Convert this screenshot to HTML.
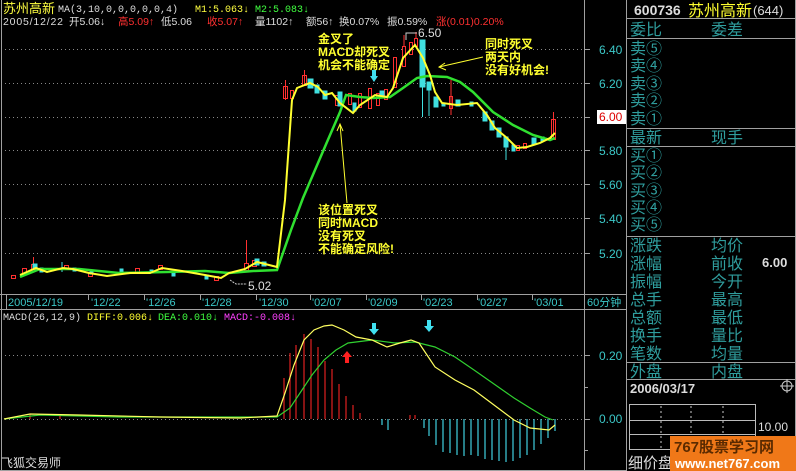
<!DOCTYPE html>
<html><head><meta charset="utf-8"><style>
html,body{margin:0;padding:0;background:#000;width:796px;height:471px;overflow:hidden}
svg{display:block}
text{font-family:"Liberation Sans","Noto Sans CJK SC",sans-serif}
.t{font-size:16px;fill:#2f9d9d}
.m{font-family:"Liberation Mono","Noto Sans CJK SC",monospace}
</style></head><body>
<svg width="796" height="471" viewBox="0 0 796 471" xmlns="http://www.w3.org/2000/svg">
<rect width="796" height="471" fill="#000"/>
<g stroke="#a0a0a0" stroke-width="1" fill="none">
<line x1="584.5" y1="0" x2="584.5" y2="471"/>
<line x1="626.5" y1="0" x2="626.5" y2="471"/>
<line x1="1.5" y1="0" x2="1.5" y2="471"/>
<line x1="0" y1="294.5" x2="626" y2="294.5"/>
<line x1="0" y1="309.5" x2="626" y2="309.5"/>
<line x1="0" y1="470.5" x2="626" y2="470.5"/>
</g>
<g stroke="#888" stroke-dasharray="1,3" stroke-width="1">
<line x1="5" y1="49.5" x2="582" y2="49.5"/><line x1="5" y1="83.5" x2="582" y2="83.5"/>
<line x1="5" y1="117.5" x2="582" y2="117.5"/><line x1="5" y1="150.5" x2="582" y2="150.5"/>
<line x1="5" y1="184.5" x2="582" y2="184.5"/><line x1="5" y1="218.5" x2="582" y2="218.5"/>
<line x1="5" y1="253.5" x2="582" y2="253.5"/>
<line x1="5" y1="355.5" x2="582" y2="355.5"/><line x1="5" y1="419.5" x2="582" y2="419.5"/>
</g>
<g stroke="#a0a0a0"><line x1="584" y1="49.5" x2="590" y2="49.5"/><line x1="584" y1="83.5" x2="590" y2="83.5"/><line x1="584" y1="117.5" x2="590" y2="117.5"/><line x1="584" y1="150.5" x2="590" y2="150.5"/><line x1="584" y1="184.5" x2="590" y2="184.5"/><line x1="584" y1="218.5" x2="590" y2="218.5"/><line x1="584" y1="253.5" x2="590" y2="253.5"/><line x1="584" y1="355.5" x2="590" y2="355.5"/><line x1="584" y1="419.5" x2="590" y2="419.5"/><line x1="584" y1="387.5" x2="588" y2="387.5"/><line x1="584" y1="450.5" x2="588" y2="450.5"/></g>
<g font-size="12" fill="#3cc8c8" font-family="Liberation Mono,monospace">
<text x="599" y="54">6.40</text><text x="599" y="88">6.20</text>
<text x="599" y="155">5.80</text><text x="599" y="189">5.60</text><text x="599" y="223">5.40</text><text x="599" y="258">5.20</text>
<text x="599" y="360">0.20</text><text x="599" y="423">0.00</text>
</g>
<rect x="597" y="110" width="29" height="14" fill="#fff"/>
<text x="599" y="121" font-size="12" fill="#d00" font-family="Liberation Mono,monospace">6.00</text>
<text x="3" y="13" font-size="13" fill="#ffff40">苏州高新</text>
<text class="m" x="58" y="12" font-size="10" fill="#ddd">MA(3,10,0,0,0,0,0,4)</text>
<text class="m" x="195" y="12" font-size="10" fill="#ffff40">M1:5.063↓</text>
<text class="m" x="255" y="12" font-size="10" fill="#40ff40">M2:5.083↓</text>
<g class="m" font-size="10.5">
<text x="3" y="25" fill="#ddd" textLength="60">2005/12/22</text>
<text x="69" y="25" fill="#ddd">开5.06↓</text>
<text x="118" y="25" fill="#ff3030">高5.09↑</text>
<text x="161" y="25" fill="#ddd">低5.06</text>
<text x="207" y="25" fill="#ff3030">收5.07↑</text>
<text x="255" y="25" fill="#ddd">量1102↑</text>
<text x="306" y="25" fill="#ddd">额56↑</text>
<text x="339" y="25" fill="#ddd">换0.07%</text>
<text x="387" y="25" fill="#ddd">振0.59%</text>
<text x="436" y="25" fill="#ff3030">涨(0.01)0.20%</text>
</g>
<g stroke-width="1">
<g stroke="#ff3030" fill="none">
<rect x="11.5" y="275.5" width="4" height="3"/><rect x="22.5" y="268.5" width="4" height="6"/><rect x="31.5" y="264.5" width="4" height="5"/>
<line x1="33.5" y1="257" x2="33.5" y2="264"/>
<rect x="64.5" y="265.5" width="4" height="3"/><rect x="88.5" y="272.5" width="4" height="4"/>
<rect x="135.5" y="268.5" width="4" height="4"/><rect x="158.5" y="265.5" width="4" height="4"/>
<rect x="214.5" y="276.5" width="4" height="4"/><rect x="244.5" y="263.5" width="4" height="7"/><line x1="246.5" y1="240" x2="246.5" y2="263"/>
<rect x="252.5" y="260.5" width="4" height="6"/>
<rect x="283.5" y="86.5" width="4" height="12"/><line x1="285.5" y1="80" x2="285.5" y2="100"/>
<rect x="290.5" y="90.5" width="3" height="8"/><rect x="302.5" y="75.5" width="4" height="10"/><line x1="304.5" y1="70" x2="304.5" y2="85"/>
<rect x="335.5" y="95.5" width="3" height="10"/><rect x="348.5" y="93.5" width="3" height="11"/><rect x="358.5" y="93.5" width="3" height="14"/>
<rect x="368.5" y="88.5" width="3" height="20"/><rect x="376.5" y="93.5" width="3" height="12"/><rect x="384.5" y="89.5" width="3" height="10"/>
<rect x="393.5" y="57.5" width="3" height="30"/><rect x="402.5" y="46.5" width="3" height="20"/><line x1="404" y1="35" x2="404" y2="46"/>
<rect x="409.5" y="42.5" width="3" height="12"/><rect x="414.5" y="38.5" width="3" height="8"/><line x1="416" y1="32" x2="416" y2="38"/>
<rect x="449.5" y="96.5" width="3" height="12"/><line x1="451" y1="80" x2="451" y2="115"/>
<rect x="516.5" y="145.5" width="3" height="5"/><rect x="523.5" y="143.5" width="3" height="5"/>
<rect x="551.5" y="119.5" width="4" height="20"/><line x1="553.5" y1="112" x2="553.5" y2="140"/>
</g>
<g fill="#40e0e0" stroke="#40e0e0">
<rect x="33" y="264" width="4" height="5"/><rect x="40" y="268" width="3" height="4"/><rect x="73" y="268" width="3" height="3"/>
<line x1="62" y1="262" x2="62" y2="272"/><rect x="90" y="271" width="3" height="3"/><rect x="120" y="269" width="3" height="4"/>
<rect x="150" y="270" width="3" height="3"/><rect x="172" y="273" width="3" height="3"/><rect x="205" y="275" width="3" height="4"/>
<rect x="255" y="259" width="4" height="6"/><rect x="262" y="262" width="4" height="4"/>
<rect x="308" y="79" width="5" height="9"/><rect x="315" y="85" width="4" height="8"/><rect x="323" y="91" width="4" height="8"/>
<rect x="338" y="92" width="4" height="14"/><rect x="353" y="103" width="3" height="8"/><rect x="380" y="91" width="4" height="7"/>
<rect x="420" y="40" width="5" height="47"/><line x1="422.5" y1="87" x2="422.5" y2="117"/>
<rect x="427" y="82" width="4" height="8"/><line x1="429" y1="90" x2="429" y2="116"/>
<rect x="434" y="97" width="4" height="10"/><rect x="442" y="103" width="3" height="3"/>
<rect x="456" y="100" width="4" height="6"/><rect x="470" y="102" width="3" height="4"/>
<rect x="483" y="112" width="4" height="9"/><rect x="490" y="121" width="4" height="9"/><rect x="497" y="128" width="4" height="9"/>
<rect x="504" y="137" width="4" height="10"/><line x1="506" y1="147" x2="506" y2="160"/><rect x="512" y="145" width="3" height="6"/>
<rect x="532" y="138" width="4" height="6"/><rect x="541" y="137" width="3" height="4"/>
</g>
</g>
<polyline fill="none" stroke="#30e030" stroke-width="2.5" points="20,277 40,269 79,269 119,273 166,272 205,271 229,273 253,271 277,270 291,230 303,198 327,142 340,112 346,95 360,97 373,98 390,97 403,88 417,78 427,76 447,77 460,82 473,92 493,112 513,125 533,135 550,140 555,138"/>
<polyline fill="none" stroke="#ffff30" stroke-width="2" points="20,275 36,268 47,272 63,268 73,269 89,273 107,276 130,273 150,273 162,268 182,271 205,275 221,278 229,273 245,269 257,262 277,267 285,200 292,100 297,88 310,83 318,87 325,95 332,93 340,103 353,113 360,105 375,95 387,97 393,88 403,58 415,45 423,58 430,75 435,92 442,103 457,105 477,103 487,115 495,128 507,138 517,148 527,147 540,143 550,138 555,133"/>
<polyline points="230,280 236,284 247,284" fill="none" stroke="#ccc" stroke-dasharray="2,1"/>
<text x="248" y="290" font-size="12" fill="#ddd">5.02</text>
<polyline points="406,40 406,33 417,33" fill="none" stroke="#ccc"/>
<text x="418" y="37" font-size="12" fill="#ddd">6.50</text>
<g font-size="12" fill="#ffff30" font-weight="bold">
<text x="318" y="43">金叉了</text><text x="318" y="56">MACD却死叉</text><text x="318" y="69">机会不能确定</text>
<text x="485" y="48">同时死叉</text><text x="485" y="61">两天内</text><text x="485" y="74">没有好机会!</text>
<text x="318" y="214">该位置死叉</text><text x="318" y="227">同时MACD</text><text x="318" y="240">没有死叉</text><text x="318" y="253">不能确定风险!</text>
</g>
<g stroke="#ffff30" fill="none">
<line x1="347" y1="203" x2="340" y2="124"/><polyline points="337,131 340,124 343,131"/>
<line x1="483" y1="57" x2="439" y2="67"/><polyline points="445,63 439,67 446,70"/>
</g>
<polygon points="372,70 376,70 376,76 378,76 374,82 370,76 372,76" fill="#40e0f0"/>
<g stroke="#a0a0a0"><line x1="6.5" y1="295" x2="6.5" y2="309"/><line x1="88.5" y1="295" x2="88.5" y2="300"/><line x1="144.5" y1="295" x2="144.5" y2="300"/><line x1="200.5" y1="295" x2="200.5" y2="300"/><line x1="256.5" y1="295" x2="256.5" y2="300"/><line x1="310.5" y1="295" x2="310.5" y2="300"/><line x1="366.5" y1="295" x2="366.5" y2="300"/><line x1="421.5" y1="295" x2="421.5" y2="300"/><line x1="477.5" y1="295" x2="477.5" y2="300"/><line x1="532.5" y1="295" x2="532.5" y2="300"/></g>
<g font-size="11" fill="#3cc8c8">
<text x="8" y="306">2005/12/19</text><text x="91" y="306">'12/22</text><text x="146" y="306">'12/26</text><text x="202" y="306">'12/28</text><text x="259" y="306">'12/30</text><text x="312" y="306">'02/07</text><text x="368" y="306">'02/09</text><text x="423" y="306">'02/23</text><text x="478" y="306">'02/27</text><text x="534" y="306">'03/01</text>
<text x="587" y="306">60分钟</text>
</g>
<text class="m" x="3" y="320" font-size="10" fill="#ddd">MACD(26,12,9)</text>
<text class="m" x="87" y="320" font-size="10" fill="#ffff30">DIFF:0.006↓</text>
<text class="m" x="158" y="320" font-size="10" fill="#40ff40">DEA:0.010↓</text>
<text class="m" x="224" y="320" font-size="10" fill="#ff40ff">MACD:-0.008↓</text>
<g stroke="#e02020" stroke-width="1.2">
<line x1="284" y1="419" x2="284" y2="378"/><line x1="290" y1="419" x2="290" y2="353"/><line x1="296" y1="419" x2="296" y2="345"/><line x1="304" y1="419" x2="304" y2="334"/><line x1="311" y1="419" x2="311" y2="339"/><line x1="318" y1="419" x2="318" y2="347"/><line x1="325" y1="419" x2="325" y2="361"/><line x1="332" y1="419" x2="332" y2="369"/><line x1="339" y1="419" x2="339" y2="384"/><line x1="346" y1="419" x2="346" y2="396"/><line x1="353" y1="419" x2="353" y2="405"/><line x1="360" y1="419" x2="360" y2="413"/><line x1="410" y1="419" x2="410" y2="415"/><line x1="415" y1="419" x2="415" y2="415"/>
<line x1="30" y1="419" x2="30" y2="414"/><line x1="60" y1="419" x2="60" y2="415"/>
</g>
<g stroke="#40d0e0" stroke-width="1.2">
<line x1="382" y1="419" x2="382" y2="425"/><line x1="388" y1="419" x2="388" y2="430"/><line x1="424" y1="419" x2="424" y2="428"/><line x1="429" y1="419" x2="429" y2="436"/><line x1="436" y1="419" x2="436" y2="445"/><line x1="443" y1="419" x2="443" y2="452"/><line x1="450" y1="419" x2="450" y2="453"/><line x1="457" y1="419" x2="457" y2="455"/><line x1="464" y1="419" x2="464" y2="456"/><line x1="471" y1="419" x2="471" y2="455"/><line x1="478" y1="419" x2="478" y2="456"/><line x1="485" y1="419" x2="485" y2="459"/><line x1="492" y1="419" x2="492" y2="460"/><line x1="499" y1="419" x2="499" y2="461"/><line x1="506" y1="419" x2="506" y2="462"/><line x1="513" y1="419" x2="513" y2="461"/><line x1="520" y1="419" x2="520" y2="458"/><line x1="527" y1="419" x2="527" y2="455"/><line x1="534" y1="419" x2="534" y2="450"/><line x1="541" y1="419" x2="541" y2="444"/><line x1="548" y1="419" x2="548" y2="438"/><line x1="555" y1="419" x2="555" y2="431"/>
</g>
<polyline fill="none" stroke="#30d030" stroke-width="1.2" points="4,419 40,415 119,417 277,417 290,408 300,393 312,375 324,360 336,350 348,343 372,340 395,343 415,342 435,347 455,357 474,370 494,384 514,398 530,408 545,417 553,420"/>
<polyline fill="none" stroke="#ffff60" stroke-width="1.2" points="4,419 30,414 79,415 160,417 240,418 277,416 285,393 294,365 304,340 314,330 324,326 332,325 344,330 356,337 372,340 387,347 400,343 411,340 419,343 427,355 435,367 455,380 474,390 494,405 514,420 530,428 549,430 555,425"/>
<polygon points="372,323 376,323 376,329 379,329 374,335 369,329 372,329" fill="#40e0f0"/>
<polygon points="427,320 431,320 431,326 434,326 429,332 424,326 427,326" fill="#40e0f0"/>
<polygon points="345,363 349,363 349,357 352,357 347,351 342,357 345,357" fill="#ff2020"/>
<text x="1" y="467" font-size="12" fill="#ddd">飞狐交易师</text>
<g stroke="#a0a0a0"><line x1="627" y1="18.5" x2="796" y2="18.5"/><line x1="627" y1="38.5" x2="796" y2="38.5"/><line x1="627" y1="128.5" x2="796" y2="128.5"/><line x1="627" y1="146.5" x2="796" y2="146.5"/><line x1="627" y1="236.5" x2="796" y2="236.5"/><line x1="627" y1="362.5" x2="796" y2="362.5"/><line x1="627" y1="379.5" x2="796" y2="379.5"/><line x1="795.5" y1="0" x2="795.5" y2="471"/></g>
<text x="634" y="15" font-size="14" fill="#ddd" font-weight="bold">600736</text>
<text x="688" y="16" font-size="16" fill="#ffff30">苏州高新</text>
<text x="753" y="15" font-size="13" fill="#ddd">(644)</text>
<g class="t">
<text x="630" y="35">委比</text><text x="711" y="35">委差</text>
<text x="630" y="54">卖⑤</text><text x="630" y="71">卖④</text><text x="630" y="89">卖③</text><text x="630" y="106">卖②</text><text x="630" y="124">卖①</text>
<text x="630" y="143">最新</text><text x="711" y="143">现手</text>
<text x="630" y="161">买①</text><text x="630" y="178">买②</text><text x="630" y="196">买③</text><text x="630" y="213">买④</text><text x="630" y="230">买⑤</text>
<text x="630" y="251">涨跌</text><text x="711" y="251">均价</text>
<text x="630" y="269">涨幅</text><text x="711" y="269">前收</text>
<text x="630" y="287">振幅</text><text x="711" y="287">今开</text>
<text x="630" y="305">总手</text><text x="711" y="305">最高</text>
<text x="630" y="323">总额</text><text x="711" y="323">最低</text>
<text x="630" y="341">换手</text><text x="711" y="341">量比</text>
<text x="630" y="359">笔数</text><text x="711" y="359">均量</text>
<text x="630" y="377">外盘</text><text x="711" y="377">内盘</text>
</g>
<text x="762" y="267" font-size="13" fill="#ddd" font-weight="bold">6.00</text>
<text x="630" y="393" font-size="13" fill="#ddd" font-weight="bold">2006/03/17</text>
<circle cx="787" cy="386" r="5" fill="none" stroke="#ccc"/><line x1="780" y1="386" x2="794" y2="386" stroke="#ccc"/><line x1="787" y1="379" x2="787" y2="393" stroke="#ccc"/>
<g stroke="#bbb" fill="none"><rect x="629.5" y="404.5" width="126" height="45"/><line x1="629" y1="420.5" x2="756" y2="420.5"/><line x1="629" y1="434.5" x2="756" y2="434.5"/></g>
<g stroke="#ccc" stroke-dasharray="2,3"><line x1="661" y1="406" x2="661" y2="450"/><line x1="691" y1="406" x2="691" y2="450"/><line x1="723" y1="406" x2="723" y2="450"/></g>
<text x="758" y="431" font-size="12" fill="#ddd">10.00</text>
<text x="628" y="468" font-size="15" fill="#ddd">细价盘</text>
<rect x="670" y="436" width="126" height="35" fill="#f07818"/>
<text x="674" y="452" font-size="15" fill="#5a2a00" font-weight="bold">767股票学习网</text>
<text x="675" y="468" font-size="13" fill="#fff" font-weight="bold" font-family="Liberation Mono,monospace">www.net767.com</text>
</svg>
</body></html>
